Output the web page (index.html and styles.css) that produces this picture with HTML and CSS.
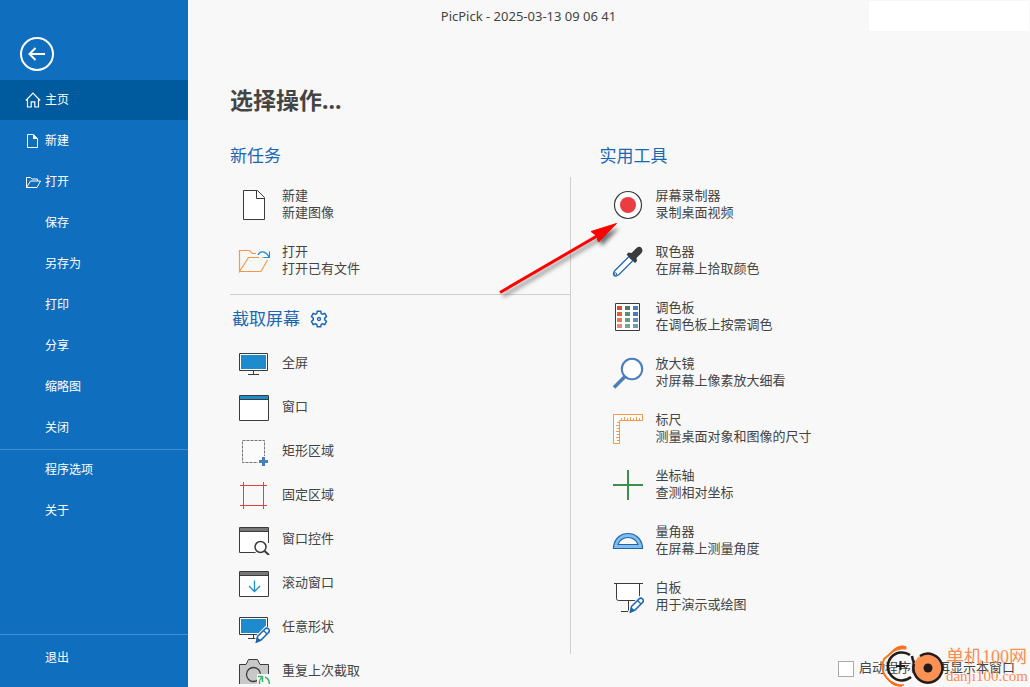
FILE: index.html
```html
<!DOCTYPE html>
<html lang="zh-CN">
<head>
<meta charset="utf-8">
<title>PicPick</title>
<link rel="stylesheet" href="styles.css">
</head>
<body>
<svg class="defs" aria-hidden="true">
  <defs>
    <g id="pen">
      <path d="M17 32l2-7L28 16l5 5-9 9z" fill="#f8f8f8" stroke="#f8f8f8" stroke-width="2"/>
      <path d="M19.500 25.500L27 18a2.300 2.300 0 0 1 3.500 3.500L23 29l-4.500 2z" fill="#fff" stroke="#1a66b3" stroke-width="1.500"/>
      <path d="M25.500 19.500l3.500 3.500" stroke="#1a66b3" stroke-width="1.200"/>
      <path d="M17.500 32l1.500-6 4 3.500z" fill="#1a66b3"/>
    </g>
    <g id="monitor">
      <path d="M1.500 6.500h28v17h-28z" fill="#fff" stroke="#3b3b3b"/>
      <path d="M3 8h25v14H3z" fill="#1e8bcd"/>
      <path d="M15.500 24v3M10 27.500h11" stroke="#3b3b3b"/>
    </g>
  </defs>
</svg>
<div class="app">
  <nav class="sidebar">
    <button class="back" aria-label="返回">
      <svg width="34" height="34" viewBox="0 0 34 34" fill="none" stroke="#fff" stroke-width="2"><circle cx="17" cy="17" r="16"/><path d="M25 17H9.500M15.500 11l-6 6 6 6"/></svg>
    </button>
    <button class="nav active">
      <svg width="16" height="16" viewBox="0 0 16 16" fill="none" stroke="#fff" stroke-width="1.200"><path d="M.8 8.500L8 1.200l7.200 7.300M2.500 7v8h3.700V9.800h3.600V15h3.700V7"/></svg><span>主页</span></button>
    <button class="nav">
      <svg width="16" height="16" viewBox="0 0 16 16" fill="none" stroke="#fff"><path d="M2.500 1.500h6l4 4v9h-10z"/><path d="M8 1.500l5 4.500H8z" fill="#fff" stroke="none"/></svg><span>新建</span></button>
    <button class="nav">
      <svg width="16" height="16" viewBox="0 0 16 16" fill="none" stroke="#fff"><path d="M1.500 13.500v-10h4l1.500 1.500h5.500v2M1.500 13.500l4-6.500h10l-3.500 6.500z"/></svg><span>打开</span></button>
    <button class="nav sub"><span>保存</span></button>
    <button class="nav sub"><span>另存为</span></button>
    <button class="nav sub"><span>打印</span></button>
    <button class="nav sub"><span>分享</span></button>
    <button class="nav sub"><span>缩略图</span></button>
    <button class="nav sub"><span>关闭</span></button>
    <hr>
    <button class="nav sub"><span>程序选项</span></button>
    <button class="nav sub"><span>关于</span></button>
    <div class="exit"><button class="nav sub"><span>退出</span></button></div>
  </nav>

  <main class="main">
    <header class="titlebar"><span class="caption">PicPick - 2025-03-13 09 06 41</span><span class="blank"></span></header>
    <h1>选择操作...</h1>
    <div class="columns">
      <h2>新任务</h2>
      <h2 class="tools-title">实用工具</h2>
      <div class="left">
        <button class="item tall"><svg viewBox="0 0 32 32"><path d="M5.500 1.500h14l7 7v22h-21z" fill="#fff" stroke="#3b3b3b"/><path d="M18.500 1.500v8h8" stroke="#3b3b3b"/></svg><span>新建<br>新建图像</span></button>
        <button class="item tall"><svg viewBox="0 0 32 32"><path d="M18 8.500h-3.500l-3-3h-10v21l9-14H21M24 12.500h2M29.500 15l-6.500 11.500H1.500" stroke="#f7974a" stroke-width="1.200"/><path d="M20 10c2-5 8-4 11 2M31.500 6.500v6H26" stroke="#1e8bcd" stroke-width="1.200"/></svg><span>打开<br>打开已有文件</span></button>
        <div class="capture-head">
          <h2>截取屏幕</h2>
          <button class="gear" aria-label="截取设置"><svg viewBox="0 0 18 18"><path d="M7.300 1.200L6.800 3.600 5.600 4.300 3.200 3.500 1.500 6.500 3.300 8.100v1.800L1.500 11.500l1.700 3 2.400-.8 1.200.7.5 2.400h3.400l.5-2.400 1.200-.7 2.400.8 1.700-3-1.800-1.600V8.100l1.800-1.600-1.700-3-2.400.8-1.200-.7-.5-2.400z" stroke="#1a66b3" stroke-width="1.500"/><circle cx="9" cy="9" r="1.500" stroke="#1a66b3" stroke-width="1.300"/></svg></button>
        </div>
        <button class="item"><svg viewBox="0 0 32 32"><use href="#monitor"/></svg><span>全屏</span></button>
        <button class="item"><svg viewBox="0 0 32 32"><path d="M1.500 4.500h29v25h-29z" fill="#fff" stroke="#3b3b3b"/><path d="M2 5h28v3H2z" fill="#1e8bcd"/><path d="M2 8.500h28" stroke="#3b3b3b"/></svg><span>窗口</span></button>
        <button class="item"><svg viewBox="0 0 32 32"><path d="M4.500 5.500h22v22h-22z" fill="#fbfbfb" stroke="#777" stroke-dasharray="3 1"/><path d="M20 21h12v11H20z" fill="#f8f8f8"/><path d="M25.500 22v9M21 26.500h9" stroke="#4a7ebb" stroke-width="3"/></svg><span>矩形区域</span></button>
        <button class="item"><svg viewBox="0 0 32 32"><path d="M5.500 3v27M25.500 3v27M2 6.500h27M2 26.500h27" stroke="#e83e40"/></svg><span>固定区域</span></button>
        <button class="item"><svg viewBox="0 0 32 32"><path d="M1.500 4.500h29v25h-29z" fill="#fff" stroke="#3b3b3b"/><path d="M2 5h28v3H2z" fill="#777"/><path d="M2 8.500h28" stroke="#3b3b3b"/><path d="M16 20h16v12H18z" fill="#f8f8f8"/><circle cx="22.500" cy="24" r="5.500" fill="#fff" stroke="#3b3b3b" stroke-width="1.500"/><path d="M26.500 28l4.500 4" stroke="#3b3b3b" stroke-width="2"/></svg><span>窗口控件</span></button>
        <button class="item"><svg viewBox="0 0 32 32"><path d="M1.500 4.500h29v25h-29z" fill="#fff" stroke="#3b3b3b"/><path d="M2 5h28v3H2z" fill="#777"/><path d="M2 8.500h28" stroke="#3b3b3b"/><path d="M16.500 13.500v11M11 19l5.500 5.500L22 19" stroke="#1e8bcd" stroke-width="1.300"/></svg><span>滚动窗口</span></button>
        <button class="item"><svg viewBox="0 0 32 32"><use href="#monitor"/><use href="#pen"/></svg><span>任意形状</span></button>
        <button class="item"><svg viewBox="0 0 32 32"><path d="M1.500 30V9.500H8l2.500-5h9l2.500 5h8.500V30z" fill="#c8c8c8" stroke="#3b3b3b"/><circle cx="15.500" cy="19.500" r="7" stroke="#3b3b3b" stroke-width="1.300"/><path d="M19 19h13v13H19z" fill="#f8f8f8"/><path d="M20 21.500h4.500V27M24.500 22c-4 3-4 7-1 9.500M27 22c4 1.500 5.500 6 3 10" stroke="#3eb26a" stroke-width="1.500"/></svg><span>重复上次截取</span></button>
      </div>
      <div class="divider"></div>
      <div class="right">
        <button class="item tall"><svg viewBox="0 0 32 32"><circle cx="16" cy="16" r="13.500" fill="#fff" stroke="#3b3b3b" stroke-width="1.200"/><circle cx="16" cy="16" r="8" fill="#eb3d40"/></svg><span>屏幕录制器<br>录制桌面视频</span></button>
        <button class="item tall"><svg viewBox="0 0 32 32"><path d="M17 11.500L3 25.500q-2.500 3-1 5 2 1.500 5-1L21 15.500z" fill="#fff" stroke="#1a66b3" stroke-width="1.200"/><circle cx="3.300" cy="29" r="1.300" stroke="#1a66b3"/><path d="M14.500 9.500l2-2 3 .5 5-5q3-2.500 5 0t0 5l-5 5 .5 3-2 2z" fill="#3b3b3b"/></svg><span>取色器<br>在屏幕上拾取颜色</span></button>
        <button class="item tall"><svg viewBox="0 0 32 32"><path d="M3.500 2.500h24v27h-24z" fill="#fff" stroke="#3b3b3b"/><path d="M5 5h5v4H5z" fill="#d35230"/><path d="M5 11h5v4H5z" fill="#e0603f"/><path d="M5 17h5v4H5z" fill="#e4765c"/><path d="M5 23h5v4H5z" fill="#e38b79"/><path d="M13 5h5v4h-5z" fill="#497d65"/><path d="M13 11h5v4h-5z" fill="#5b8e77"/><path d="M13 17h5v4h-5z" fill="#659a86"/><path d="M13 23h5v4h-5z" fill="#74a694"/><path d="M21 5h5v4h-5z" fill="#4a7ebb"/><path d="M21 11h5v4h-5z" fill="#4a7ebb"/><path d="M21 17h5v4h-5z" fill="#668db8"/><path d="M21 23h5v4h-5z" fill="#7298ba"/></svg><span>调色板<br>在调色板上按需调色</span></button>
        <button class="item tall"><svg viewBox="0 0 32 32"><circle cx="20" cy="12" r="10.200" fill="#fff" stroke="#4a7ebb" stroke-width="2"/><path d="M13 19.500L2 30.500" stroke="#4a7ebb" stroke-width="3.500"/></svg><span>放大镜<br>对屏幕上像素放大细看</span></button>
        <button class="item tall"><svg viewBox="0 0 32 32"><path d="M1.500 1.500h29v6h-23v23h-6z" fill="#fff" stroke="#f7974a"/><path d="M9.500 7V5M12.500 7V4M15.500 7V5M18.500 7V4M21.500 7V5M24.500 7V4M27.500 7V5M7 9.500H5M7 12.500H4M7 15.500H5M7 18.500H4M7 21.500H5M7 24.500H4M7 27.500H5" stroke="#f7974a"/></svg><span>标尺<br>测量桌面对象和图像的尺寸</span></button>
        <button class="item tall"><svg viewBox="0 0 32 32"><path d="M16 1v30M1 16h30" stroke="#3a904c" stroke-width="2"/></svg><span>坐标轴<br>查测相对坐标</span></button>
        <button class="item tall"><svg viewBox="0 0 32 32"><path d="M1.500 23.500v-2C3 13 9 8.500 16 8.500S29 13 30.500 21.500v2zM6 19.500h20c-2-5-6-7-10-7s-8 2-10 7z" fill="#83bbec" fill-rule="evenodd" stroke="#1a66b3" stroke-width="1.200"/></svg><span>量角器<br>在屏幕上测量角度</span></button>
        <button class="item tall"><svg viewBox="0 0 32 32"><path d="M4.500 2.500v15q0 2 2 2h21v-17" fill="#fff" stroke="#3b3b3b"/><path d="M2 2.500h29M16.500 20v10M9 30.500h7" stroke="#3b3b3b"/><use href="#pen"/></svg><span>白板<br>用于演示或绘图</span></button>
        <label class="startup"><input type="checkbox"><span>启动程序时不再显示本窗口</span></label>
      </div>
    </div>
  </main>

  <svg class="pointer" width="140" height="90" viewBox="0 0 140 90" aria-hidden="true">
    <g transform="translate(3 4)" class="shadow"><path d="M10 77l95-56" stroke="#555" stroke-width="3"/><path d="M126 9L101 17l5 4 3 6z" fill="#333"/></g>
    <path d="M10 77.500L107 21" stroke="#f00" stroke-width="3"/><path d="M126.500 8.500L101 16.500l5.500 4 2 6.500z" fill="#f00" stroke="#f00"/>
  </svg>

  <div class="watermark">
    <svg width="64" height="44" viewBox="0 0 64 44" fill="none" aria-hidden="true">
      <path d="M25 3Q17 2 12 7T3 15Q-1 25 5 33T21 42" stroke="#fb711c" stroke-width="2"/>
      <path d="M25 3Q18-1 9 10 16 4 25 5zM5 33Q12 45 23 41 14 42 5 33z" fill="#fb711c" stroke="#fb711c"/>
      <path d="M29 11A14 14 0 1 0 30 33" stroke="#211b1a" stroke-width="2.500"/>
      <path d="M15 22h9M19.500 17v9" stroke="#211b1a" stroke-width="2"/>
      <path d="M31 12Q32 20 38 24" stroke="#211b1a" stroke-width="2.500"/>
      <circle cx="47" cy="24" r="14.500" fill="#fb9253"/>
      <path d="M39 12A14.500 14.500 0 1 1 33 20" stroke="#211b1a" stroke-width="2.500"/>
      <circle cx="47" cy="24" r="4.500" fill="#211b1a"/>
    </svg>
    <div class="brand"><b>单机100网</b><span>danji100.com</span></div>
  </div>
</div>
</body>
</html>
```
FILE: styles.css
```css
* { box-sizing: border-box; }
body {
  margin: 0;
  background: #f8f8f8;
  color: #444;
  font: 13px/17px "Noto Sans", "Noto Sans CJK SC", sans-serif;
}
button {
  border: 0;
  padding: 0;
  background: none;
  color: inherit;
  font: inherit;
  text-align: left;
}
svg { flex: none; }
.defs { position: absolute; width: 0; height: 0; }
.app {
  position: relative;
  display: flex;
  height: 100vh;
  overflow: hidden;
}

/* Sidebar */
.sidebar {
  display: flex;
  flex-direction: column;
  gap: 1px;
  flex: none;
  width: 188px;
  padding-bottom: 9px;
  background: #106ebe;
  color: #fff;
  font-size: 12px;
}
.back { width: 34px; height: 34px; margin: 37px 0 8px 20px; }
.nav {
  display: flex;
  align-items: center;
  gap: 4px;
  flex: none;
  width: 100%;
  height: 40px;
  padding-left: 25px;
}
.nav span, .item span, .startup span { padding-bottom: 2px; }
.nav.sub { padding-left: 45px; }
.nav.active { background: #005a9e; }
.sidebar hr {
  width: 100%;
  height: 1px;
  margin: 0 0 -1px;
  border: 0;
  background: #438dcc;
}
.exit {
  margin-top: auto;
  padding-top: 3px;
  border-top: 1px solid #438dcc;
}

/* Main area */
.main {
  display: flex;
  flex-direction: column;
  flex: 1;
  min-width: 0;
}
.titlebar { display: flex; padding: 1px 1px 0 0; }
.caption {
  flex: 1;
  padding-top: 7px;
  text-align: center;
}
.blank { width: 160px; height: 30px; background: #fff; }
h1 {
  margin: 53px 0 0 42px;
  font-size: 23px;
  line-height: 32px;
}
h2 {
  margin: 0;
  color: #1a66b3;
  font-size: 17px;
  font-weight: 400;
  line-height: 24px;
}
.columns {
  display: grid;
  grid-template-columns: 17fr 1px 23fr;
  grid-template-rows: 33px 1fr;
  flex: 1;
  min-height: 0;
  margin: 28px 0 0 42px;
}
.tools-title { grid-column: 3; padding-left: 29px; }
.left { margin-bottom: 3px; overflow: hidden; }
.divider { margin-bottom: 33px; background: #d0d0d0; }
.right {
  display: flex;
  flex-direction: column;
  padding: 0 15px 9px 29px;
}
.item {
  display: flex;
  align-items: center;
  gap: 12px;
  flex: none;
  width: 100%;
  height: 44px;
  padding-left: 8px;
}
.item.tall { height: 56px; }
.right .item { padding-left: 12px; }
.item svg { width: 32px; height: 32px; fill: none; }
.capture-head {
  display: flex;
  align-items: center;
  gap: 10px;
  height: 47px;
  margin-top: 5px;
  padding: 2px 0 0 2px;
  border-top: 1px solid #d0d0d0;
}
.gear { width: 18px; height: 18px; }
.gear svg { display: block; width: 18px; height: 18px; fill: none; }
.startup {
  display: flex;
  align-items: center;
  gap: 5px;
  margin-top: auto;
  align-self: flex-end;
}
.startup input {
  appearance: none;
  width: 16px;
  height: 16px;
  margin: 0;
  border: 1px solid #aaa;
  background: #fff;
}

/* Overlays */
.pointer { position: absolute; left: 490px; top: 215px; fill: none; }
.shadow { filter: blur(2px); opacity: .7; }
.watermark {
  position: absolute;
  right: 2px;
  bottom: -1px;
  display: flex;
  align-items: center;
  gap: 1px;
}
.brand {
  display: flex;
  flex-direction: column;
  color: #fb8c50;
  font-family: "Liberation Serif", "Noto Sans CJK SC", serif;
}
.brand b { font-size: 18px; font-weight: 400; line-height: 20px; }
.brand span { font-size: 15px; line-height: 18px; }
```
